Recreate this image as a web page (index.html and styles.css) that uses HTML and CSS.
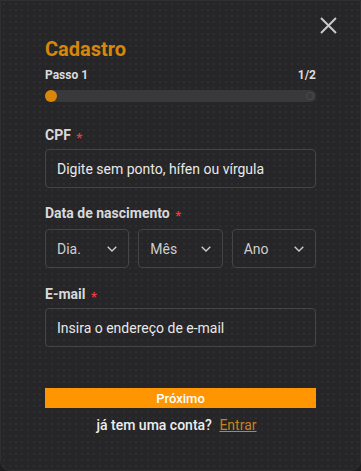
FILE: index.html
```html
<!DOCTYPE html>
<html lang="pt">
<head>
<meta charset="utf-8">
<link rel="stylesheet" href="styles.css">
</head>
<body>
<div class="card">
  <button class="close" aria-label="Fechar">
    <svg width="17" height="17" viewBox="0 0 17 17"><path d="M1 1L16 16M16 1L1 16" stroke="#c9c9c9" stroke-width="2" fill="none"/></svg>
  </button>
  <h1 class="title">Cadastro</h1>
  <div class="step-row"><span>Passo 1</span><span>1/2</span></div>
  <div class="progress"><span class="dot"></span><span class="end"></span></div>

  <label class="label first">CPF <span class="req">*</span></label>
  <div class="input">Digite sem ponto, hífen ou vírgula</div>

  <label class="label date">Data de nascimento <span class="req">*</span></label>
  <div class="selects">
    <div class="select"><span>Dia.</span><svg width="10" height="6" viewBox="0 0 10 6"><path d="M0.7 0.7L5 5L9.3 0.7" stroke="#cfcfcf" stroke-width="1.3" fill="none"/></svg></div>
    <div class="select"><span>Mês</span><svg width="10" height="6" viewBox="0 0 10 6"><path d="M0.7 0.7L5 5L9.3 0.7" stroke="#cfcfcf" stroke-width="1.3" fill="none"/></svg></div>
    <div class="select"><span>Ano</span><svg width="10" height="6" viewBox="0 0 10 6"><path d="M0.7 0.7L5 5L9.3 0.7" stroke="#cfcfcf" stroke-width="1.3" fill="none"/></svg></div>
  </div>

  <label class="label email">E-mail <span class="req">*</span></label>
  <div class="input">Insira o endereço de e-mail</div>

  <button class="next">Próximo</button>
  <p class="footer">já tem uma conta? <a href="#">Entrar</a></p>
</div>
</body>
</html>
```
FILE: styles.css
```css
* { box-sizing: border-box; }
html, body { margin: 0; padding: 0; background: #1e1d1f; }
body { font-family: Roboto, "Noto Sans", sans-serif; }
.card {
  position: relative;
  width: 361px;
  height: 471px;
  background-color: #262527;
  background-image: radial-gradient(rgba(255,255,255,0.035) 0.8px, transparent 0.9px);
  background-size: 6px 6px;
  border: 1px solid #2f2e30;
  border-radius: 0 0 10px 10px;
  padding: 37px 44px 0 44px;
  display: flex;
  flex-direction: column;
}
.close {
  position: absolute;
  top: 16px;
  right: 23px;
  background: none;
  border: 0;
  padding: 0;
  width: 17px;
  height: 17px;
  display: flex;
}
.title {
  margin: 0;
  font-size: 20px;
  line-height: 23px;
  font-weight: 700;
  color: #d7870c;
}
.step-row {
  margin-top: 7px;
  display: flex;
  justify-content: space-between;
  font-size: 12px;
  line-height: 14px;
  font-weight: 700;
  color: #dcdcdc;
}
.progress {
  margin-top: 8px;
  height: 12px;
  border-radius: 6px;
  background: #39383a;
  display: flex;
  align-items: center;
  justify-content: space-between;
  padding-right: 2px;
}
.dot {
  width: 12px;
  height: 12px;
  border-radius: 50%;
  background: #d9860b;
}
.end {
  width: 8px;
  height: 8px;
  border-radius: 50%;
  border: 1px solid #4b4a4c;
}
.label {
  display: block;
  font-size: 14px;
  line-height: 16px;
  font-weight: 700;
  color: #d9d9d9;
}
.label.first { margin-top: 25px; }
.label.date { margin-top: 17px; }
.label.email { margin-top: 18px; }
.req {
  color: #ee3a3f;
  font-size: 13px;
  font-weight: 700;
  margin-left: 2px;
  position: relative;
  top: 2px;
}
.input {
  margin-top: 5px;
  height: 39px;
  border: 1px solid #454446;
  border-radius: 4px;
  padding: 0 11px;
  display: flex;
  align-items: center;
  font-size: 14px;
  color: #e9e9e9;
}
.selects {
  margin-top: 7px;
  display: grid;
  grid-template-columns: repeat(3, 1fr);
  gap: 9px;
}
.select {
  height: 39px;
  border: 1px solid #454446;
  border-radius: 4px;
  padding: 0 11px 0 11px;
  display: flex;
  align-items: center;
  justify-content: space-between;
  font-size: 14px;
  color: #cfcfcf;
}
.next {
  margin-top: 41px;
  height: 20px;
  border: 0;
  padding: 0;
  background: #ff9500;
  color: #ffffff;
  font-family: inherit;
  font-size: 13px;
  font-weight: 500;
}
.footer {
  margin: 9px 0 0;
  padding-right: 8px;
  text-align: center;
  font-size: 14px;
  line-height: 17px;
  font-weight: 500;
  color: #ededed;
}
.footer a {
  color: #c9821d;
  font-weight: 400;
  margin-left: 4px;
}
```
